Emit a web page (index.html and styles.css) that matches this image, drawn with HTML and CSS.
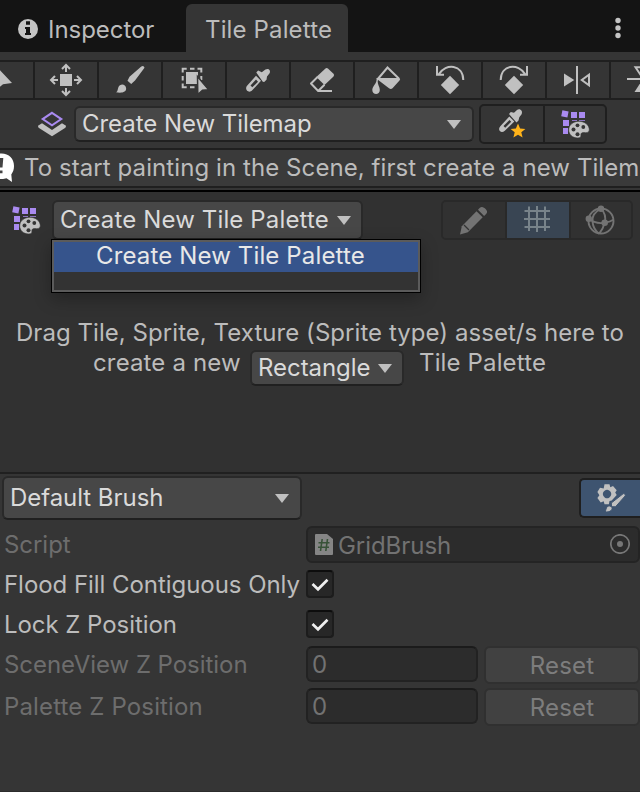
FILE: index.html
```html
<!DOCTYPE html>
<html lang="en">
<head>
<meta charset="utf-8">
<title>Tile Palette</title>
<link rel="stylesheet" href="styles.css">
</head>
<body>
<svg class="defs" width="0" height="0">
  <symbol id="tiles" viewBox="561 109 30 30">
    <g fill="#a98af0"><path d="M562.4 110.2l6.2 1.3-1.2 6-6.2-1.3zM571 112h6v6h-6zM579 112h6v6h-6zM563 120h6v6h-6zM563 128h5v6h-5zM572 120h5v.8h-5zM579 120h6v.8h-6z"/></g>
    <path d="M579 121.300c-6 0-10.300 3.700-10.300 8.700 0 4.400 4 8 9 8 2.500 0 3.500-1 3.200-3-.2-1.700.9-2.600 2.800-2.400 3 .3 5.600-.2 5.600-2.700 0-4.900-4.500-8.600-10.300-8.600z" fill="#c0c0c0" stroke="#353535" stroke-width=".6"/>
    <g fill="#353535"><circle cx="573.500" cy="129.500" r="2"/><circle cx="577.500" cy="125.300" r="1.900"/><circle cx="583.300" cy="127" r="1.900"/><circle cx="577.500" cy="134.300" r="2"/></g>
  </symbol>
</svg>
<main class="window">
  <header class="tabs">
    <div class="tab"><svg class="info" viewBox="0 0 20 20"><circle cx="10" cy="10" r="10" fill="#c4c4c4"/><path d="M8 2.300h4v3.400H8zM7 8h5v6h1v2H7v-2h1v-4H7z" fill="#141414"/></svg><span class="tight">Inspector</span></div>
    <div class="tab active"><span>Tile Palette</span></div>
    <svg class="kebab" viewBox="612 16 12 24"><g fill="#c4c4c4"><circle cx="618" cy="20.500" r="2.700"/><circle cx="618" cy="28" r="2.700"/><circle cx="618" cy="35.500" r="2.700"/></g></svg>
  </header>

  <nav class="tools">
    <div class="tool first"><svg viewBox="0 62 33 36"><path class="f" d="M-4 66L12 83 3 84.200-4 90z"/></svg></div>
    <div class="tool"><svg viewBox="35 62 62 36"><path class="f" d="M60 74h12v12H60z"/><path class="s" d="M66 72v-6.500M62 69l4-4 4 4M66 88v6.500M62 91l4 4 4-4M58 80h-6.500M55 76l-4 4 4 4M74 80h6.500M77 76l4 4-4 4"/></svg></div>
    <div class="tool"><svg viewBox="99 62 62 36"><path class="f" d="M141.300 66.500q2.500-1.300 3.200 1.300L135 80.500l-3.800 3.600-3.700-3.400 2-4zM116 92.300c2-.7 1.500-3 2.300-4.800 1.700-4.200 7.200-3.700 7.800.6.500 4.500-5.100 5.400-10.100 4.200z"/></svg></div>
    <div class="tool"><svg viewBox="163 62 62 36"><path class="s" d="M182.700 72.500v-3.800h4M190 68.700h4.500M197.500 68.700h3.800v3.800M182.700 76v4.500M182.700 83.500v3.800h4M190 87.300h4.500M201.300 76v4"/><path class="f" d="M186 72h12v12h-12z"/><path class="f" stroke="#353535" stroke-width="1.500" d="M197.500 76.500l11.200 13.300-6.200.4-4.700 4.300z"/></svg></div>
    <div class="tool"><svg viewBox="227 62 62 36"><g class="f"><path fill-rule="evenodd" d="M256 75.800l5 5-8.500 9.200c-3.500 4.300-9-.5-5-4.800zM256 79.500l-5.500 6 1.800 1.800 5.700-5.600z"/><path d="M256.300 72.500l1.800-2 3.700 1.800 3.600-2.800c3-1.700 5.600.8 4.200 3.700l-2.600 3.300-.5 3.300-2.300 2.300-1.400-.3z"/></g></svg></div>
    <div class="tool"><svg viewBox="291 62 62 36"><path class="f" d="M325.200 68.700q1.500-1.300 3 0l5.300 5.100q1.300 1.300 0 2.700L324.500 85l-8.200-8z"/><path class="s" stroke-linejoin="round" d="M317.300 77.300l-6.300 6.200 7.200 7.500 6.300-6.300M318 91h14"/></svg></div>
    <div class="tool"><svg viewBox="355 62 62 36"><path class="s" d="M377 80l10.500-12.500 11.300 11"/><path class="f" d="M376 78h23.500q1.300 1.200 0 2.500l-7 7.700q-1.600 1.500-3.500 0L379.500 81zM376.500 80c-.1 4-4.200 6.200-4.200 10 0 5.300 7.500 5.300 7.500 0 0-3.800-2.500-5-2-10z"/></svg></div>
    <div class="tool"><svg viewBox="419 62 62 36"><path class="s" d="M463.300 80C463 64.500 446 62.500 438.500 74.500M437 66v8.800h7"/><path class="f" d="M450 75.800l9.200 9.200-9.200 9.200-9.200-9.200z"/></svg></div>
    <div class="tool"><svg viewBox="483 62 62 36"><path class="s" d="M500.700 80C501 64.500 518 62.500 525.500 74.500M527 66v8.800h-7"/><path class="f" d="M514 75.800l9.200 9.200-9.200 9.200-9.200-9.200z"/></svg></div>
    <div class="tool"><svg viewBox="547 62 62 36"><path class="s" d="M577 66v28M589 74.800v10.400L581.800 80z"/><path class="f" d="M564 73.500L574.300 80 564 86.500z"/></svg></div>
    <div class="tool last"><svg viewBox="611 62 29 36"><path class="s" d="M627 79h20M635.500 67.200h11L641 75.500z"/><path class="f" d="M641 82l-6.500 10h13z"/></svg></div>
  </nav>

  <section class="target">
    <svg class="tilemap" viewBox="38 110 28 28"><path d="M52 112.800l9.300 6.300-9.300 6.300-9.300-6.300z" fill="none" stroke="#a98af0" stroke-width="2"/><path class="f" d="M42 123.300L52 130l10-6.700 4 2.400Q66 127.500 65 128l-13 8.300L39 128q-1-.500-1-2.300z"/></svg>
    <div class="drop tilemap-drop"><span class="tight">Create New Tilemap</span><svg class="caret" viewBox="0 0 14 9"><path d="M0 0h14L7 9z"/></svg></div>
    <div class="group">
      <div class="cell"><svg viewBox="482 107 62 36"><g class="f"><path fill-rule="evenodd" d="M510.300 117.500l5 5-9.500 9.300c-3.700 3.200-7.800-.8-4.500-4.500zM510.500 121l-6 6.100 1.700 1.700 6-6.100z"/><path d="M510 115l1.800-2 3.200.8 3-2.800c3-2 6.200 1 4.600 4.200l-2.300 3-.8 3.300-2 2z"/></g><path d="M519 124.500l2.100 5 5.300.4-4.100 3.400 1.300 5.200-4.600-2.800-4.600 2.800 1.300-5.200-4.100-3.400 5.300-.4z" fill="#ffb31a"/></svg></div>
      <div class="cell right"><svg class="tile-icon" viewBox="0 0 30 30"><use href="#tiles"/></svg></div>
    </div>
  </section>

  <div class="help"><svg class="bubble" viewBox="0 150 18 36"><path d="M1.500 153.500c7.500 0 12.500 5.200 12.500 12.500 0 3.500-1 6-2.700 8.500l.7 7.500-5.500-3.700c-2 .7-3.500.8-6.500.7v-25.500z" fill="#fff"/><path d="M0 158h3.300l-.8 9.500H0zM0 170.500h2.500v2.700H0z" fill="#444"/></svg><span>To start painting in the Scene, first create a new Tilem</span></div>

  <section class="palette">
    <div class="palette-bar">
      <svg class="tile-icon" viewBox="0 0 30 30"><use href="#tiles"/></svg>
      <div class="select">
        <div class="drop palette-drop"><span>Create New Tile Palette</span><svg class="caret" viewBox="0 0 14 9"><path d="M0 0h14L7 9z"/></svg></div>
        <div class="menu"><div class="item">Create New Tile Palette</div></div>
      </div>
      <div class="group dim">
        <div class="cell"><svg viewBox="443 202 62 36"><g fill="#737373"><path d="M460 234.500l1.800-8.200 14.700-15 6.200 6-14.800 15z"/><path d="M478 209.700l1.600-1.600c2.300-2.200 4.500-.6 6 1 1.500 1.500 2.300 3.300.5 5l-2 2z"/></g><path d="M464 225l5 5" stroke="#333" stroke-width="1.200"/></svg></div>
        <div class="cell on"><svg viewBox="507 202 62 36"><path d="M529 206.500V231M537 206v26M545 206.500V231M524.500 211H550M524 219h26M524.500 227H550" stroke="#78838a" stroke-width="2" fill="none"/></svg></div>
        <div class="cell right"><svg viewBox="572 202 60 36"><g fill="none" stroke="#737373" stroke-width="1.900"><circle cx="602" cy="221" r="12.500"/><path d="M602 208.700c-6 3-9 8-8.500 13s2.500 9 6.500 12M602 208.700c4 4 5 9 3.700 14s-3 8-5.500 11M589.800 218.800c5 4 10 5 15.900 3.900 4-.7 6.500-1.500 8.700-3"/></g><g fill="#737373"><circle cx="602" cy="208.700" r="3.200"/><circle cx="589.800" cy="218.800" r="3.200"/><circle cx="605.700" cy="222.700" r="3.300"/></g></svg></div>
      </div>
    </div>
    <div class="message">
      <div class="line one">Drag Tile, Sprite, Texture (Sprite type) asset/s here to</div>
      <div class="line two"><span class="before">create a new</span><div class="drop shape-drop"><span class="tight">Rectangle</span><svg class="caret" viewBox="0 0 14 9"><path d="M0 0h14L7 9z"/></svg></div><span>Tile Palette</span></div>
    </div>
  </section>

  <section class="brush">
    <div class="brush-bar">
      <div class="drop brush-drop"><span class="tight">Default Brush</span><svg class="caret" viewBox="0 0 14 9"><path d="M0 0h14L7 9z"/></svg></div>
      <div class="gear"><svg viewBox="581 480 59 36"><path class="f" fill-rule="evenodd" d="M604.500 484.300h5l.8 3 2.700-1.200 3.700 4.200-1.500 2.200 1.500 2.500-5 5.500-2.200.5-.6 3.200h-4.400l-.8-3-3 1.200-3.300-4.500 2-2.600-2-3.300 2.600-4.200 3.700.7zM607 489.800a4.200 4.200 0 1 0 .1 0z"/><path class="f" stroke="#3e5470" stroke-width="1" d="M623.300 493.600l1.800.4.200 1.800-9.800 11-4-.1-.2-3.700zM605.300 512c1-5 2-6.300 4.500-6 4 .6 3 6.500-4.500 6z"/></svg></div>
    </div>
    <div class="row script"><label class="faded tight">Script</label><div class="object"><svg class="doc" viewBox="0 0 18 21"><path d="M1 0h11l6 5v15q0 1-1 1H1q-1 0-1-1V1q0-1 1-1z" fill="#858585"/><path d="M7.200 5l-1.700 12M12.500 5l-1.700 12M3.500 8.700h11M3 13.200h11" stroke="#385238" stroke-width="1.600"/></svg><span class="tight">GridBrush</span><svg class="picker" viewBox="0 0 20 20"><circle cx="10" cy="10" r="9.200" fill="none" stroke="#777" stroke-width="1.700"/><circle cx="10" cy="10" r="3" fill="#777"/></svg></div></div>
    <div class="row check"><label class="tight">Flood Fill Contiguous Only</label><div class="box"><svg viewBox="0 0 24 24"><path d="M4.500 12l5.500 5.300L19.500 7.800"/></svg></div></div>
    <div class="row check"><label class="tight">Lock Z Position</label><div class="box"><svg viewBox="0 0 24 24"><path d="M4.500 12l5.500 5.300L19.500 7.800"/></svg></div></div>
    <div class="row number"><label class="faded tight">SceneView Z Position</label><div class="field">0</div><div class="reset">Reset</div></div>
    <div class="row number"><label class="faded">Palette Z Position</label><div class="field">0</div><div class="reset">Reset</div></div>
  </section>
</main>
</body>
</html>
```
FILE: styles.css
```css
* { box-sizing: border-box; }
body { margin: 0; background: #353535; overflow: hidden; }
.defs { display: block; }
svg { display: block; flex: none; }
.window { width: 640px; height: 792px; overflow: hidden; border-bottom: 1px solid #2c2c2c; background: #353535; color: #bcbcbc; font: 400 24px/30px Inter, "Liberation Sans", sans-serif; letter-spacing: .14px; white-space: nowrap; }
.tight { letter-spacing: -.05px; }
.f { fill: #c0c0c0; }
.s { fill: none; stroke: #c0c0c0; stroke-width: 2; }

.tabs { display: flex; height: 52px; background: #141414; }
.tab { display: flex; width: 186px; padding: 15px 0 0 18px; }
.info { width: 20px; height: 20px; margin: 4px 10px 0 0; }
.active { width: 162px; height: 48px; margin-top: 4px; padding: 11px 0 0 19px; border-radius: 6px 6px 0 0; background: #353535; }
.kebab { width: 12px; height: 24px; margin: 16px 16px 0 auto; }

.tools { display: flex; height: 40px; margin-top: 8px; border: solid #1f1f1f; border-width: 2px 0; }
.tool { flex: none; width: 64px; height: 36px; border-right: 2px solid #1f1f1f; overflow: hidden; }
.tool svg { width: 62px; height: 36px; }
.first { width: 35px; }
.first svg { width: 33px; }
.last { width: 29px; border: 0; }
.last svg { width: 29px; }

.target { display: flex; height: 48px; padding: 5px 0 0 38px; }
.tilemap { width: 28px; height: 28px; margin: 5px 8px 0 0; }
.drop { display: flex; align-items: center; justify-content: space-between; border: 2px solid #292929; border-bottom-color: #202020; border-radius: 6px; background: #474747; color: #dadada; }
.caret { width: 14px; height: 9px; fill: #c0c0c0; }
.tilemap-drop { width: 400px; height: 36px; margin-top: 1px; padding: 0 11px 0 6px; }
.group { display: flex; width: 128px; height: 40px; margin: -1px 0 0 5px; border: 2px solid #1f1f1f; border-radius: 5px; overflow: hidden; }
.cell { flex: none; width: 64px; border-right: 2px solid #1f1f1f; }
.cell > svg { width: 100%; height: 100%; }
.cell.right { width: 60px; border: 0; }
.cell > .tile-icon { width: 30px; height: 30px; margin: 3px 0 0 16px; }

.help { display: flex; height: 40px; border: solid #1f1f1f; border-width: 2px 0; background: #3a3a3a; line-height: 36px; letter-spacing: .08px; }
.bubble { width: 18px; height: 36px; margin-right: 6px; }

.palette { height: 284px; margin-top: 2px; border-top: 2px solid #000; border-bottom: 2px solid #202020; background: #313131; }
.palette-bar { display: flex; height: 100px; padding: 8px 0 0 12px; }
.palette-bar > .tile-icon { width: 30px; height: 30px; margin-top: 5px; }
.select { position: relative; margin-left: 10px; }
.palette-drop { width: 311px; height: 40px; padding: 0 10px 0 6px; }
.menu { position: absolute; left: -1px; top: 39px; width: 370px; height: 54px; border: 1px solid #000; box-shadow: inset 0 0 0 2px #5b5b5b, 0 6px 16px rgba(0,0,0,.28); background: #333; padding: 2px; }
.item { height: 30px; padding-left: 42px; background: #36548c; color: #e8e8e8; line-height: 28px; }
.dim { width: 192px; height: 40px; margin: 0 0 0 78px; border-color: #292929; }
.dim .cell { border-color: #292929; background: #313131; }
.dim .cell.on { background: #394553; }
.message { padding-top: 26px; }
.line { display: flex; height: 30px; }
.one { padding-left: 16px; letter-spacing: .05px; }
.two { padding-left: 93px; }
.before { width: 157px; }
.shape-drop { width: 154px; height: 36px; margin: 2px 15px 0 0; padding: 0 10px 0 6px; }

.brush-bar { display: flex; justify-content: space-between; height: 52px; padding: 2px 0 0 2px; }
.brush-drop { width: 300px; height: 44px; padding: 0 11px 0 6px; }
.gear { width: 61px; height: 40px; margin-top: 2px; border: 2px solid #1f1f1f; border-right: 0; border-radius: 5px 0 0 5px; background: #3e5470; }
.gear svg { width: 59px; height: 36px; }
.row { display: flex; }
.row label { width: 306px; padding-left: 4px; }
.row .faded { color: #6d6d6d; }
.script { height: 44px; line-height: 38px; }
.object { display: flex; width: 334px; height: 37px; border: 2px solid #242424; border-radius: 6px; background: #2c2c2c; color: #727272; line-height: 36px; }
.doc { width: 18px; height: 21px; margin: 6px 5px 0 7px; }
.picker { width: 20px; height: 20px; margin: 6px 8px 0 auto; }
.check { height: 40px; line-height: 29px; }
.box { width: 28px; height: 28px; border: 2px solid #1c1c1c; border-top-color: #0d0d0d; border-radius: 4px; background: #272727; }
.box svg { width: 24px; height: 24px; fill: none; stroke: #eee; stroke-width: 2.7; }
.check + .number { margin-top: -4px; }
.number { height: 42px; line-height: 37px; }
.field { width: 172px; height: 36px; padding-left: 4px; border: 2px solid #222; border-top-color: #1b1b1b; border-radius: 6px; background: #2c2c2c; color: #727272; line-height: 34px; }
.reset { width: 156px; height: 38px; margin-left: 6px; border: 2px solid #303030; border-radius: 6px; background: #414141; color: #7d7d7d; text-align: center; line-height: 35px; }
```
